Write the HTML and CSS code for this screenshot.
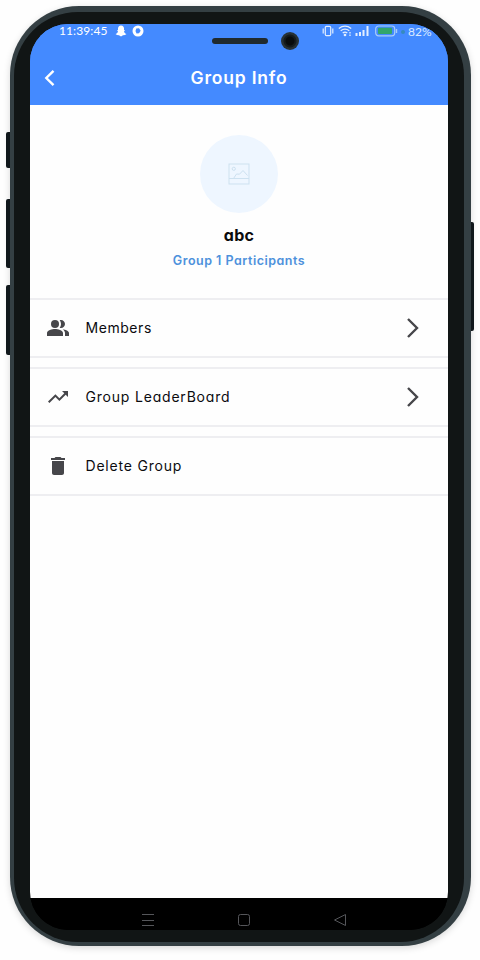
FILE: index.html
```
<!DOCTYPE html>
<html lang="en">
<head>
<meta charset="utf-8">
<title>Group Info</title>
<link rel="stylesheet" href="styles.css">
</head>
<body>
<div class="phone">
  <span class="side-button mute"></span>
  <span class="side-button volume-up"></span>
  <span class="side-button volume-down"></span>
  <span class="side-button power"></span>
  <div class="bezel">
    <div class="screen">
      <span class="speaker"></span>
      <span class="camera"></span>
      <header class="header">
        <div class="status">
          <span class="time">11:39:45</span>
          <svg class="ghost" width="12" height="12" viewBox="0 0 12 12"><path fill="#fff" d="M6 .5C4 .5 3 2 3 3.500V5L2 5.200 3 6.400C2.600 7.700 1.700 8.500.500 9L2 10 4 10.300 6 11.500 8 10.300 10 10 11.500 9C10.300 8.500 9.400 7.700 9 6.400L10 5.200 9 5V3.500C9 2 8 .5 6 .5Z"/></svg>
          <svg class="ring" width="12" height="12" viewBox="0 0 12 12"><circle cx="6" cy="6" r="5.500" fill="#fff"/><path fill="#448aff" d="M4.300 3.500 7 3.300 8.700 5.700 7 8.300 4.500 8.500 3.500 6z"/></svg>
          <svg class="vibrate" width="12" height="12" viewBox="0 0 12 12" fill="none" stroke="#e3eeff" stroke-width="1.200"><rect x="3.300" y="1.300" width="5.400" height="9.400" rx="1.200"/><path d="M1.200 3.500v5M10.800 3.500v5"/></svg>
          <svg class="wifi" width="15" height="12" viewBox="0 0 15 12" fill="none" stroke="#e3eeff" stroke-width="1.300"><path d="M.8 3.400Q7 -1.300 13.200 3.400M2.700 5.700Q7 2.500 11.300 5.700M4.700 8Q7 6.200 9.300 8"/><circle cx="7" cy="10" r=".7"/><path d="M12 7v1.600M12 9.500v1.600"/></svg>
          <svg class="signal" width="15" height="12" viewBox="0 0 15 12" fill="#e3eeff"><path d="M.5 8H2.500v3H.5zM4 7H6v4H4zM7.500 5h2v6h-2zM11.500 1h2v10h-2z"/></svg>
          <svg class="battery" width="23" height="12" viewBox="0 0 23 12"><rect x=".7" y="1" width="19" height="9.800" rx="2.800" fill="none" stroke="#a9cdf8" stroke-width="1.200"/><rect x="3" y="2.800" width="14" height="6.200" rx="1" fill="#32a66b"/><path d="M21.500 4v4" stroke="#a9cdf8" stroke-width="1.400"/></svg>
          <span class="charge"></span>
          <span class="percent">82%</span>
        </div>
        <div class="title-bar">
          <svg class="back" width="12" height="18" viewBox="0 0 12 18"><path d="M9.500 1.800 2.300 9l7.200 7.200" fill="none" stroke="#fff" stroke-width="2.400"/></svg>
          <h1>Group Info</h1>
        </div>
      </header>
      <main class="content">
        <section class="profile">
          <div class="avatar">
            <svg width="22" height="22" viewBox="0 0 22 22" fill="none" stroke="#cde1f0" stroke-width="1"><rect x="1" y="1" width="20" height="20"/><circle cx="5.800" cy="5.800" r="1.600"/><path d="M1 15.500H5.500L8.500 11l3 .2L15 7.500l4.500 5M1 15.500h20"/></svg>
          </div>
          <h2>abc</h2>
          <p>Group 1 Participants</p>
        </section>
        <nav class="menu">
          <div class="row">
            <svg class="icon" width="24" height="24" viewBox="0 0 24 24" fill="#46464a"><path d="M16.670 13.130C18.040 14.060 19 15.320 19 17v3h4v-3c0-2.180-3.570-3.470-6.330-3.870z"/><circle cx="9" cy="8" r="4"/><path d="M15 12c2.210 0 4-1.790 4-4s-1.790-4-4-4c-.47 0-.91.1-1.330.24C14.500 5.270 15 6.580 15 8s-.5 2.730-1.330 3.760c.42.14.86.24 1.330.24zM9 13c-2.670 0-8 1.340-8 4v3h16v-3c0-2.660-5.330-4-8-4z"/></svg>
            <span class="label members">Members</span>
            <svg class="chevron" width="14" height="22" viewBox="0 0 14 22"><path d="M2 2l9 9-9 9" fill="none" stroke="#46464a" stroke-width="2.400"/></svg>
          </div>
          <div class="row">
            <svg class="icon" width="24" height="24" viewBox="0 0 24 24" fill="#46464a"><path d="M16 6l2.290 2.290-4.880 4.880-4-4L2 16.590 3.410 18l6-6 4 4 6.300-6.290L22 12V6z"/></svg>
            <span class="label leader">Group LeaderBoard</span>
            <svg class="chevron" width="14" height="22" viewBox="0 0 14 22"><path d="M2 2l9 9-9 9" fill="none" stroke="#46464a" stroke-width="2.400"/></svg>
          </div>
          <div class="row">
            <svg class="icon" width="24" height="24" viewBox="0 0 24 24" fill="#46464a"><path d="M6 19c0 1.100.9 2 2 2h8c1.100 0 2-.9 2-2V7H6v12zM19 4h-3.500l-1-1h-5l-1 1H5v2h14V4z"/></svg>
            <span class="label delete">Delete Group</span>
          </div>
        </nav>
      </main>
      <footer class="nav-bar">
        <svg width="14" height="14" viewBox="0 0 14 14" stroke="#55565a" fill="none"><path d="M1 1.500h12M1 7.500h12M1 12.500h12"/></svg>
        <svg width="14" height="14" viewBox="0 0 14 14" stroke="#55565a" fill="none"><rect x="1.500" y="1.500" width="11" height="11" rx="2"/></svg>
        <svg width="14" height="14" viewBox="0 0 14 14" stroke="#55565a" fill="none"><path d="M12.500 1.500v11L1.500 7z" stroke-linejoin="round"/></svg>
      </footer>
    </div>
  </div>
</div>
</body>
</html>
```
FILE: styles.css
```
* { box-sizing: border-box; }
body {
  margin: 0;
  height: 960px;
  padding: 6px 9px 14px 10px;
  background: #fefefe;
  font-family: Inter, "Open Sans", sans-serif;
  font-feature-settings: "cv11";
  overflow: hidden;
}
h1, h2, p { margin: 0; }
svg { display: block; flex: none; }
.phone {
  position: relative;
  width: 461px;
  height: 940px;
  padding: 6px 7px 4px 4px;
  border-radius: 69px;
  background: #343f43;
  box-shadow: 0 2px 7px rgba(0, 0, 0, .15);
}
.bezel {
  height: 100%;
  padding: 12px 16px;
  border-radius: 64px;
  background: #111515;
}
.screen {
  position: relative;
  display: flex;
  flex-direction: column;
  width: 418px;
  height: 906px;
  border-radius: 38px;
  overflow: hidden;
  background: linear-gradient(#448aff 50%, #000 50%);
}
.side-button {
  position: absolute;
  left: -4px;
  width: 4px;
  border-radius: 2px 0 0 2px;
  background: #11181c;
}
.mute { top: 126px; height: 36px; }
.volume-up { top: 193px; height: 69px; }
.volume-down { top: 279px; height: 70px; }
.power { left: 461px; top: 216px; width: 3px; height: 109px; border-radius: 0 2px 2px 0; }
.speaker {
  position: absolute;
  left: 182px;
  top: 14px;
  width: 56px;
  height: 6px;
  border-radius: 3px;
  background: #202a2e;
}
.camera {
  position: absolute;
  left: 251px;
  top: 8px;
  width: 18px;
  height: 18px;
  border-radius: 50%;
  background: radial-gradient(circle, #080b0c 0 4px, #151b1d 5px 6px, #273135 7px);
}
.header {
  height: 81px;
  flex: none;
  background: #448aff;
  color: #fff;
}
.status {
  display: flex;
  align-items: center;
  height: 15px;
  padding-left: 29px;
  font: 12px/15px Lato, sans-serif;
}
.status svg { margin-top: -1px; }
.time { width: 56px; margin-top: -2px; letter-spacing: .1px; }
.ring { margin-left: 5px; }
.vibrate { margin-left: 178px; }
.wifi { margin-left: 4px; }
.signal { margin-left: 2px; }
.battery { margin-left: 5px; }
.charge { width: 4px; height: 4px; margin-left: 3px; border-radius: 50%; background: #368bbd; }
.percent { margin: -1px 0 0 3px; color: #dceaff; }
.title-bar {
  display: flex;
  align-items: center;
  height: 66px;
  padding: 11px 13px 0 14px;
}
.back { margin-top: 1px; }
h1 {
  flex: 1;
  padding-right: 13px;
  text-align: center;
  font-size: 17.500px;
  line-height: 22px;
  font-weight: 600;
  letter-spacing: .8px;
}
.content { flex: 1; background: #fefefe; }
.profile {
  display: flex;
  flex-direction: column;
  align-items: center;
  height: 193px;
  padding-top: 30px;
  text-align: center;
}
.avatar {
  display: flex;
  align-items: center;
  justify-content: center;
  width: 78px;
  height: 78px;
  border-radius: 50%;
  background: #eef6ff;
}
h2 {
  margin-top: 12px;
  font-size: 16px;
  line-height: 20px;
  font-weight: 700;
  letter-spacing: .3px;
  color: #0b0b0d;
}
.profile p {
  margin-top: 8px;
  font-size: 12.500px;
  line-height: 16px;
  font-weight: 600;
  letter-spacing: .5px;
  color: #4d91dc;
}
.menu { display: grid; gap: 9px; }
.row {
  display: flex;
  align-items: center;
  height: 60px;
  padding: 0 28px 0 16px;
  border: solid #eeeef1;
  border-width: 2px 0;
}
.icon { margin-left: -.5px; }
.label {
  flex: 1;
  margin: -2px 0 0 16px;
  font-size: 14px;
  letter-spacing: .8px;
  color: #0b0b0f;
}
.members { letter-spacing: .55px; }
.nav-bar {
  display: flex;
  flex: none;
  gap: 82px;
  height: 32px;
  padding: 15px 0 0 111px;
  background: #000;
}
```
